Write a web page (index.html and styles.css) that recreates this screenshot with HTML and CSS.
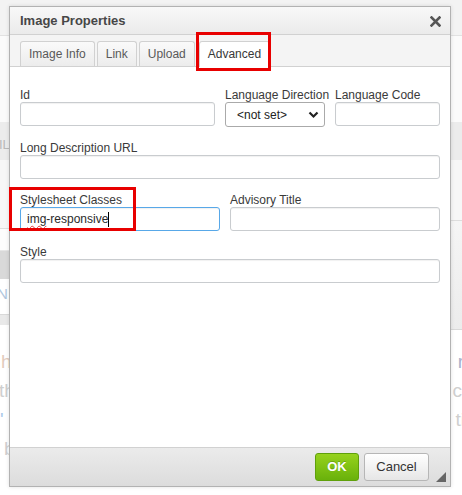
FILE: index.html
```html
<!DOCTYPE html>
<html>
<head>
<meta charset="utf-8">
<link rel="stylesheet" href="styles.css">
</head>
<body>
<div class="backdrop">
  <div class="bg-a"></div>
  <div class="bg-b"></div>
  <div class="bg-c"><span class="bg-il">IL</span></div>
  <div class="bg-d"></div>
  <div class="bg-e">
    <div class="bg-e-left">
      <div class="bl-white"></div>
      <div class="bl-btn"></div>
      <div class="bl-n">N</div>
      <div class="bl-gray"></div>
    </div>
    <div class="bg-e-right"></div>
  </div>
  <div class="bg-f">
    <div class="txt-row"><span class="t-tan">h</span><span class="t-blue">r</span></div>
    <div class="txt-row"><span class="t-gray">th</span><span class="t-gray r2">c</span></div>
    <div class="txt-row"><span class="t-lblue">'</span><span class="t-gray r3">ti</span></div>
    <div class="txt-row"><span class="t-gray l4">b</span><span></span></div>
  </div>
</div>

<div class="dialog">
  <div class="titlebar">
    <span class="title">Image Properties</span>
    <svg class="close" width="11" height="11" viewBox="0 0 11 11"><path d="M1.5 1.5 L9.5 9.5 M9.5 1.5 L1.5 9.5" stroke="#565656" stroke-width="2.6" stroke-linecap="square"/></svg>
  </div>
  <div class="tabs">
    <div class="tab">Image Info</div>
    <div class="tab">Link</div>
    <div class="tab">Upload</div>
    <div class="tab active">Advanced</div>
  </div>
  <div class="content">
    <div class="row row1">
      <div class="field"><label>Id</label><input class="input" type="text"></div>
      <div class="field"><label>Language Direction</label>
        <div class="select"><span>&lt;not set&gt;</span>
          <svg width="11" height="8" viewBox="0 0 11 8"><path d="M1.5 1.5 L5.5 5.5 L9.5 1.5" fill="none" stroke="#222" stroke-width="2.2"/></svg>
        </div>
      </div>
      <div class="field"><label>Language Code</label><input class="input" type="text"></div>
    </div>
    <div class="row">
      <div class="field"><label>Long Description URL</label><input class="input" type="text"></div>
    </div>
    <div class="row row3">
      <div class="field"><label>Stylesheet Classes</label>
        <div class="input focused"><span class="misspelled">img</span>-responsive<span class="caret"></span></div>
      </div>
      <div class="field"><label>Advisory Title</label><input class="input" type="text"></div>
    </div>
    <div class="row">
      <div class="field"><label>Style</label><input class="input" type="text"></div>
    </div>
  </div>
  <div class="footer">
    <div class="btn ok">OK</div>
    <div class="btn cancel">Cancel</div>
    <div class="grip"></div>
  </div>
</div>

<div class="mark mark-tab"></div>
<div class="mark mark-field"></div>
</body>
</html>
```

FILE: styles.css
```css
html, body {
  margin: 0;
  padding: 0;
}
body {
  width: 462px;
  height: 495px;
  overflow: hidden;
  position: relative;
  font-family: "Liberation Sans", Arial, sans-serif;
  background: #fff;
}

/* backdrop (faded editor behind the dialog) */
.backdrop {
  display: flex;
  flex-direction: column;
  height: 495px;
}
.bg-a {
  height: 35px;
  background: #f3f3f3;
  border-bottom: 1px solid #e2e2e2;
}
.bg-b {
  height: 86px;
  background: #fbfbfb;
}
.bg-c {
  height: 38px;
  background: #ececec;
  display: flex;
  align-items: center;
  padding-top: 6px;
  box-sizing: border-box;
}
.bg-il {
  color: #b9b9b9;
  font-size: 13px;
  margin-left: -1px;
}
.bg-d {
  height: 68px;
  background: #f7f7f7;
  border-bottom: 1px solid #dedede;
}
.bg-e {
  height: 101px;
  display: flex;
  justify-content: space-between;
}
.bg-e-left {
  width: 9px;
  display: flex;
  flex-direction: column;
}
.bl-white {
  height: 21px;
  background: #fdfdfd;
  border-bottom: 1px solid #e6e6e6;
}
.bl-btn {
  height: 28px;
  background: #d9d9d9;
}
.bl-n {
  height: 35px;
  color: #b0c6dd;
  font-size: 15px;
  line-height: 30px;
  margin-left: -3px;
  border-bottom: 1px solid #d9d9d9;
}
.bl-gray {
  height: 10px;
  background: #e9e9e9;
}
.bg-e-right {
  width: 12px;
  background: linear-gradient(#f5f5f5, #ececec);
  border-top: 1px solid #dddddd;
  border-bottom: 1px solid #d9d9d9;
  margin-top: -9px;
}
.bg-f {
  flex: 1;
  background: #fff;
  padding-top: 17px;
}
.txt-row {
  height: 29px;
  display: flex;
  justify-content: space-between;
  font-size: 19px;
  line-height: 29px;
}
.t-tan { color: #e2cbbd; margin-left: 1px; }
.t-gray { color: #cfcfcf; margin-left: -1px; }
.t-blue { color: #aab2cc; margin-right: -2px; }
.t-lblue { color: #a9c9ea; }
.r2 { margin-right: 0; }
.r3 { margin-right: -3px; }
.l4 { margin-left: 4px; }

/* dialog */
.dialog {
  position: absolute;
  left: 9px;
  top: 6px;
  width: 440px;
  height: 479px;
  border: 1px solid #b2b2b2;
  box-shadow: 0 0 4px rgba(0, 0, 0, 0.12);
  background: #fff;
  display: flex;
  flex-direction: column;
}
.titlebar {
  height: 27px;
  flex: none;
  background: linear-gradient(#f8f8f8, #ebebeb);
  border-bottom: 1px solid #d1d1d1;
  display: flex;
  align-items: center;
  justify-content: space-between;
  padding: 0 9px 0 10px;
}
.title {
  font-size: 13px;
  font-weight: bold;
  color: #474747;
}
.close {
  display: block;
  margin-top: 1px;
}
.tabs {
  flex: none;
  height: 25px;
  padding: 6px 0 0 10px;
  background: #f4f4f4;
  border-bottom: 1px solid #d1d1d1;
  display: flex;
  gap: 2px;
  align-items: flex-end;
}
.tab {
  height: 25px;
  box-sizing: border-box;
  padding: 0 8px;
  border: 1px solid #d1d1d1;
  border-bottom: none;
  border-radius: 3px 3px 0 0;
  background: linear-gradient(#fafafa, #ececec);
  font-size: 12px;
  line-height: 24px;
  color: #595959;
  margin-bottom: 0;
}
.tab.active {
  height: 26px;
  margin-bottom: -1px;
  margin-left: 2px;
  background: #fff;
  color: #383838;
  line-height: 25px;
}

.content {
  flex: 1;
  padding: 21px 10px 0 10px;
  display: flex;
  flex-direction: column;
  gap: 14px;
}
.row {
  display: grid;
  grid-template-columns: 1fr;
}
.row1 {
  grid-template-columns: 195px 100px 105px;
  column-gap: 10px;
}
.row3 {
  grid-template-columns: 200px 210px;
  column-gap: 10px;
}
.field {
  display: flex;
  flex-direction: column;
}
label {
  display: block;
  font-size: 12px;
  line-height: 14px;
  color: #3a3a3a;
  white-space: nowrap;
}
.input {
  display: block;
  box-sizing: border-box;
  width: 100%;
  height: 24px;
  margin: 0;
  border: 1px solid #c9cccf;
  border-radius: 3px;
  box-shadow: inset 0 1px 1px rgba(0, 0, 0, 0.06);
  background: #fff;
  font-family: inherit;
  font-size: 12px;
  padding: 0 6px;
}
.input.focused {
  border-color: #58a8e8;
  color: #2a2a2a;
  line-height: 22px;
  display: flex;
  align-items: center;
  padding-left: 6px;
}
.misspelled {
  text-decoration: underline wavy #e23b3b;
  text-decoration-thickness: 1px;
  text-underline-offset: 2px;
}
.caret {
  display: inline-block;
  width: 1px;
  height: 15px;
  background: #000;
  margin-left: 0;
}
.select {
  box-sizing: border-box;
  height: 25px;
  border: 1px solid #aaaaaa;
  border-radius: 3px;
  background: #fff;
  display: flex;
  align-items: center;
  justify-content: space-between;
  padding: 0 5px 0 11px;
  font-size: 12px;
  color: #222;
}
.select svg {
  display: block;
  margin-top: 1px;
}

.footer {
  flex: none;
  border-top: 1px solid #d1d1d1;
  background: linear-gradient(#ebebeb, #dcdcdc);
  display: flex;
  justify-content: flex-end;
  align-items: flex-start;
  padding: 5px 21px 0 0;
  box-sizing: border-box;
  height: 39px;
  gap: 5px;
  position: relative;
}
.btn {
  height: 28px;
  box-sizing: border-box;
  border-radius: 3px;
  font-size: 12px;
  line-height: 26px;
  text-align: center;
}
.ok {
  width: 44px;
  background: linear-gradient(#96d21d, #69b10b);
  border: 1px solid #5fa00b;
  color: #fff;
  font-weight: bold;
  font-size: 13px;
  text-shadow: 0 -1px 0 rgba(0, 0, 0, 0.2);
}
.cancel {
  width: 65px;
  background: linear-gradient(#ffffff, #e6e6e6);
  border: 1px solid #b6b6b6;
  color: #333;
  font-size: 13px;
}
.grip {
  position: absolute;
  right: 4px;
  bottom: 4px;
  width: 0;
  height: 0;
  border-left: 10px solid transparent;
  border-bottom: 10px solid #666;
}

/* red annotation boxes */
.mark {
  position: absolute;
  border: 3px solid #e80000;
  box-sizing: border-box;
}
.mark-tab {
  left: 196px;
  top: 32px;
  width: 75px;
  height: 39px;
}
.mark-field {
  left: 9px;
  top: 187px;
  width: 127px;
  height: 44px;
}
```
